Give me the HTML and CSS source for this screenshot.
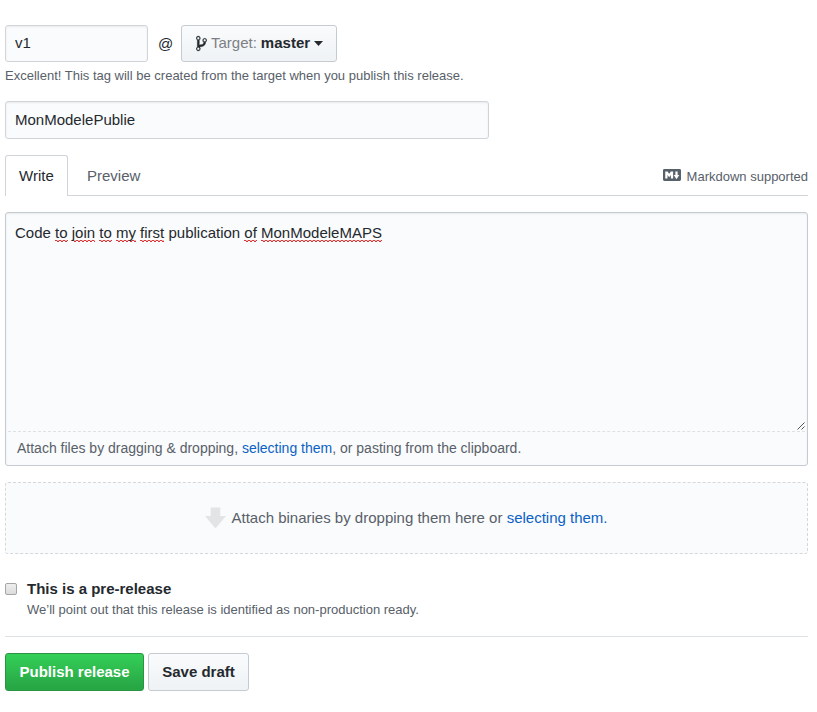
FILE: index.html
```html
<!DOCTYPE html>
<html lang="en">
<head>
<meta charset="utf-8">
<title>New release</title>
<link rel="stylesheet" href="styles.css">
</head>
<body>
<main class="release">
  <div class="tag-row">
    <input class="field tag-name" type="text" value="v1" aria-label="Tag">
    <span class="at">@</span>
    <button class="btn target" type="button">
      <svg class="branch" viewBox="0 0 10 16"><path d="M10 5c0-1.11-.89-2-2-2a1.993 1.993 0 0 0-1 3.72v.3c-.02.52-.23.98-.63 1.38-.4.4-.86.61-1.38.63-.83.02-1.48.16-2 .45V4.72a1.993 1.993 0 0 0-1-3.72C.88 1 0 1.89 0 3a2 2 0 0 0 1 1.72v6.56c-.59.35-1 .99-1 1.72 0 1.11.89 2 2 2 1.11 0 2-.89 2-2 0-.53-.2-1-.53-1.36.09-.06.48-.41.59-.47.25-.11.56-.17.94-.17 1.05-.05 1.95-.45 2.75-1.25S8.95 7.77 9 6.73h-.02C9.59 6.37 10 5.73 10 5zM2 1.8c.66 0 1.2.55 1.2 1.2 0 .65-.55 1.2-1.2 1.2C1.35 4.2.8 3.65.8 3c0-.65.55-1.2 1.2-1.2zm0 12.41c-.66 0-1.2-.55-1.2-1.2 0-.65.55-1.2 1.2-1.2.65 0 1.2.55 1.2 1.2 0 .65-.55 1.2-1.2 1.2zm6-8c-.66 0-1.2-.55-1.2-1.2 0-.65.55-1.2 1.2-1.2.65 0 1.2.55 1.2 1.2 0 .65-.55 1.2-1.2 1.2z"/></svg>
      <span class="target-label">Target:</span>
      <span class="target-name">master</span>
      <svg class="caret" viewBox="0 0 9 5"><path d="M0 0h9L4.5 5z"/></svg>
    </button>
  </div>
  <p class="tag-note">Excellent! This tag will be created from the target when you publish this release.</p>

  <input class="field title" type="text" value="MonModelePublie" aria-label="Release title">

  <nav class="tabs">
    <a class="tab tab-active">Write</a>
    <a class="tab">Preview</a>
    <span class="markdown">
      <svg class="markdown-icon" viewBox="0 3 16 10" preserveAspectRatio="none"><path d="M14.85 3H1.15C.52 3 0 3.52 0 4.15v7.69C0 12.48.52 13 1.15 13h13.69c.64 0 1.15-.52 1.15-1.15v-7.7C16 3.52 15.48 3 14.85 3zM9 11H7V8L5.5 9.92 4 8v3H2V5h2l1.5 2L7 5h2v6zm2.99.5L9.5 8H11V5h2v3h1.5l-2.51 3.5z"/></svg>
      <span>Markdown supported</span>
    </span>
  </nav>

  <section class="editor">
    <div class="body-text">Code <u>to</u> <u>join</u> <u>to</u> <u>my</u> <u>first</u> publication <u>of</u> <u>MonModeleMAPS</u>
      <svg class="grip" viewBox="0 0 8 8"><path d="M.5 7.5l7-7M4.5 7.5l3-3"/></svg>
    </div>
    <p class="attach">Attach files by dragging &amp; dropping, <a>selecting them</a>, or pasting from the clipboard.</p>
  </section>

  <section class="binaries">
    <svg class="arrow" viewBox="0 0 22 22"><path d="M6 0h10v9h6L11 22 0 9h6z"/></svg>
    <span>Attach binaries by dropping them here or <a>selecting them.</a></span>
  </section>

  <div class="prerelease">
    <span class="checkbox" role="checkbox" aria-checked="false"></span>
    <div>
      <strong class="pre-title">This is a pre-release</strong>
      <p class="pre-note">We’ll point out that this release is identified as non-production ready.</p>
    </div>
  </div>

  <div class="actions">
    <button class="btn primary" type="button">Publish release</button>
    <button class="btn draft" type="button">Save draft</button>
  </div>
</main>
</body>
</html>
```
FILE: styles.css
```css
* { box-sizing: border-box; }

body {
  margin: 0;
  background: #fff;
  color: #24292e;
  font: 15px/22px "Liberation Sans", Arial, sans-serif;
}

p { margin: 0; }
a { color: #0366d6; }
.binaries a, .attach a { color: #0b62c6; }

.release {
  display: flex;
  flex-direction: column;
  width: 803px;
  margin: 25px 0 0 5px;
}

.tag-row { display: flex; align-items: center; height: 37px; }

.field {
  border: 1px solid #d1d5da;
  border-radius: 3px;
  background: #fafbfc;
  box-shadow: inset 0 1px 2px rgba(27, 31, 35, .075);
  color: #24292e;
  font: inherit;
  padding: 0 9px 2px;
}
.tag-name { width: 143px; height: 37px; }
.at { width: 33px; padding-left: 2px; text-align: center; font-size: 15px; }

.btn {
  display: flex;
  align-items: center;
  justify-content: center;
  height: 38px;
  padding: 0;
  border: 1px solid #c6cbd1;
  border-radius: 3px;
  background: linear-gradient(#fafbfc, #eff3f6 90%);
  color: #24292e;
  font: bold 15px/22px "Liberation Sans", Arial, sans-serif;
}
.target { width: 156px; height: 37px; justify-content: flex-start; padding: 0 0 2px 14px; }
.branch { width: 11px; height: 17px; margin-top: 1px; fill: #24292e; stroke: #24292e; stroke-width: .25; }
.target-label { margin-left: 4px; color: #7c8085; font-weight: normal; }
.target-name { margin-left: 4px; }
.caret { width: 9px; height: 5px; margin: 1px 0 0 4px; fill: #24292e; }

.tag-note { margin-top: 4px; font-size: 13px; line-height: 20px; color: #586069; }
.title { width: 484px; height: 38px; margin-top: 15px; }

.tabs {
  display: flex;
  height: 41px;
  margin-top: 16px;
  border-bottom: 1px solid #d1d5da;
}
.tab { height: 41px; padding: 9px 14px; color: #586069; border: 1px solid transparent; border-bottom: 0; }
.tab + .tab { margin-left: 4px; }
.tab-active {
  width: 63px;
  padding: 9px 13px;
  border-color: #d1d5da;
  border-radius: 3px 3px 0 0;
  background: #fff;
  color: #24292e;
}
.markdown {
  display: flex;
  align-items: center;
  gap: 5px;
  height: 44px;
  margin-left: auto;
  font-size: 13px;
  color: #586069;
}
.markdown-icon { width: 18px; height: 12px; margin: -4px 1px 0 0; fill: #586069; }

.editor {
  height: 254px;
  margin-top: 16px;
  border: 1px solid #c6cbd1;
  border-radius: 3px;
  background: #fafbfc;
  box-shadow: inset 0 1px 2px rgba(27, 31, 35, .075);
}
.body-text {
  position: relative;
  height: 219px;
  margin: 0 2px;
  padding: 9px 7px;
  border-bottom: 1px dashed #dfe2e5;
}
.body-text u {
  padding-bottom: 1px;
  text-decoration: none;
  background:
    linear-gradient(90deg, #d93636 2px, #f0b4b4 2px) 0 calc(100% - 1px) / 4px 1px repeat-x,
    linear-gradient(90deg, transparent 2px, #d93636 2px) 0 100% / 4px 1px repeat-x;
}
.grip { position: absolute; right: 0; bottom: 1px; width: 8px; height: 8px; fill: none; stroke: #555; }
.attach { padding: 6px 11px; font-size: 14px; line-height: 21px; color: #586069; }

.binaries {
  display: flex;
  align-items: center;
  justify-content: center;
  gap: 5px;
  height: 72px;
  margin-top: 16px;
  border: 1px dashed #d5d8db;
  border-radius: 3px;
  background: #fafbfc;
  color: #586069;
}
.arrow { width: 21px; height: 22px; fill: #e3e4e5; }

.prerelease {
  display: flex;
  height: 59px;
  margin-top: 24px;
  border-bottom: 1px solid #dfe2e5;
}
.checkbox {
  width: 12px;
  height: 12px;
  margin: 5px 10px 0 0;
  border: 1px solid #a5a5a5;
  border-radius: 2px;
  background: linear-gradient(#eee, #dcdcdc);
}
.pre-title { display: block; }
.pre-note { font-size: 13px; line-height: 20px; color: #586069; }

.actions { display: flex; gap: 4px; margin-top: 16px; }
.primary {
  width: 139px;
  border-color: #2a9443;
  background: linear-gradient(#34d058, #28a745 90%);
  color: #fff;
}
.draft { width: 101px; }
```
